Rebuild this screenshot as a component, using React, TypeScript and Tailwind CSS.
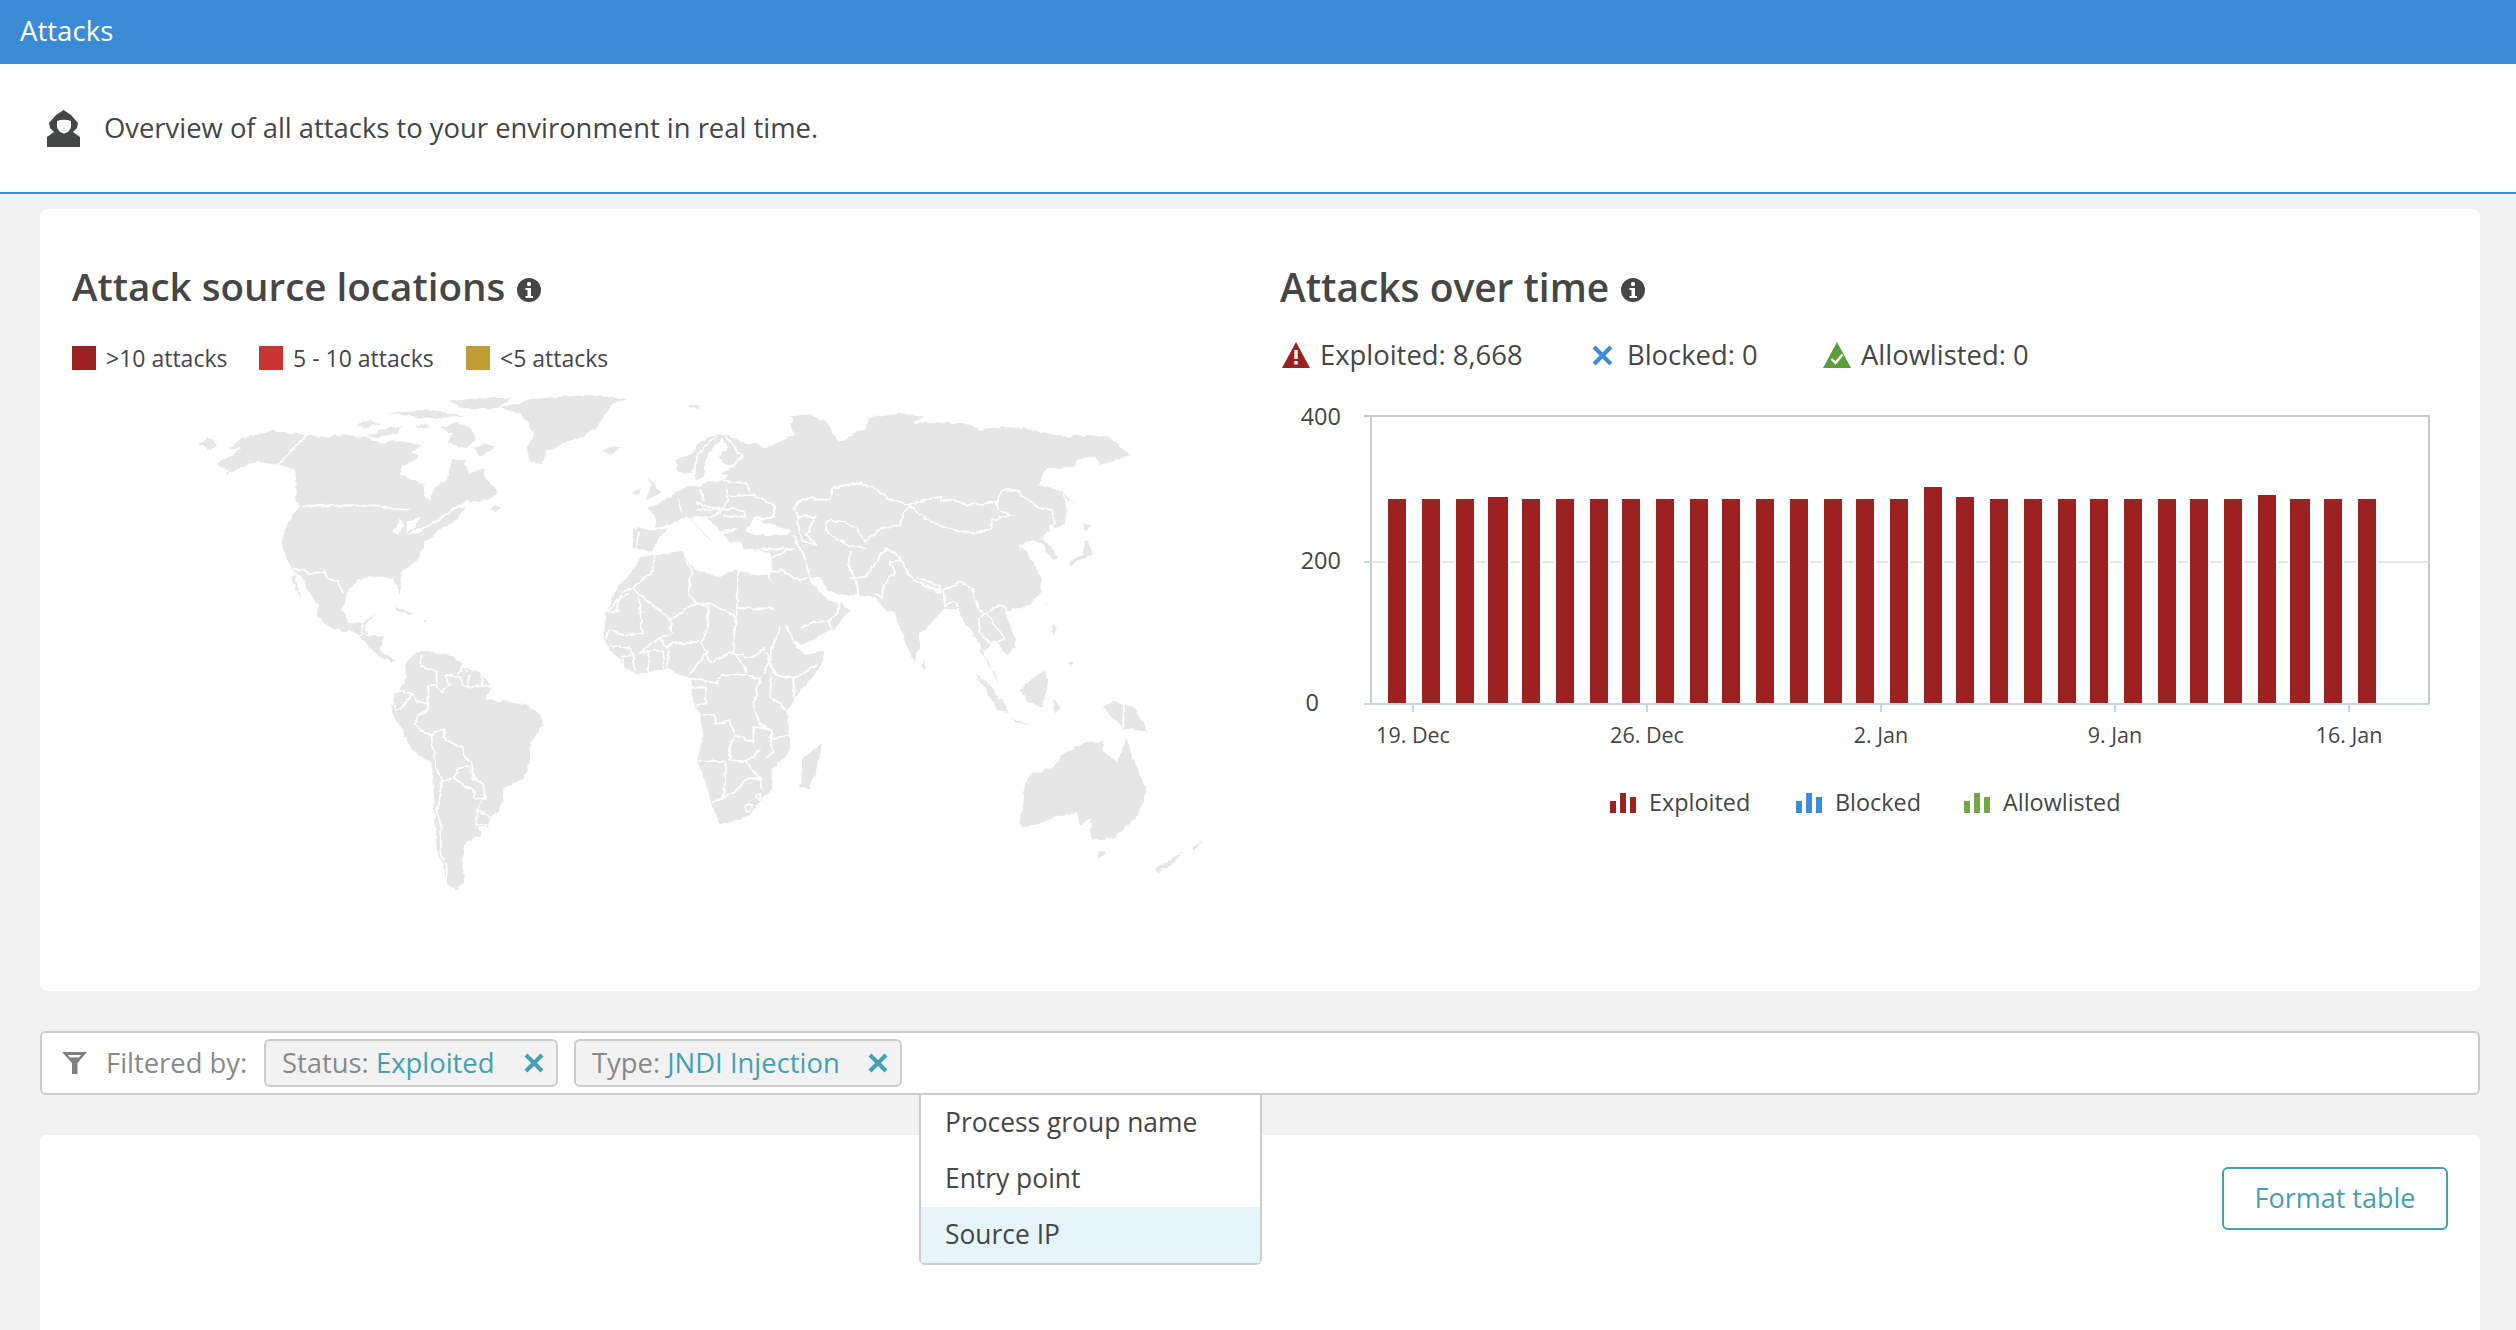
import React from "react";

const P = ({ d }: { d: string }) => <polygon points={d} />;
const L = ({ d }: { d: string }) => <polyline points={d} />;

const west = [
  "58,178 80,158 115,180 85,195",
  "110,232 150,215 185,190 145,190 190,158 280,137 380,150 420,158 490,148 560,160 610,178 640,165 700,175 725,185 690,200 720,215 665,245 660,268 690,282 730,298 735,335 750,345 768,305 800,285 805,262 818,222 850,225 868,265 912,250 918,285 955,318 925,345 860,350 820,372 860,370 830,405 790,425 760,450 735,470 720,520 665,560 660,630 650,605 640,578 580,575 530,583 500,625 487,670 505,715 545,715 590,682 555,725 565,745 610,755 600,795 650,830 672,830 640,830 590,810 550,765 510,735 490,742 440,720 415,695 415,660 385,620 370,580 345,560 335,545 315,515 305,470 320,420 345,380 360,370 345,340 350,290 340,250 290,240 240,230 210,235 170,255 135,272 150,255 110,240",
  "340,555 350,600 367,640 348,615 338,580",
  "925,375 945,360 965,368 945,378",
  "530,125 560,105 600,115 550,130",
  "560,155 620,130 665,122 650,145 600,155",
  "705,125 740,115 750,130 715,130",
  "780,130 830,110 870,130 890,160 860,190 800,170 820,145",
  "880,190 910,175 950,185 900,215",
  "805,50 880,40 1000,38 950,70 850,70",
  "620,85 760,75 850,95 760,100",
  "960,70 1050,42 1220,30 1340,42 1300,55 1270,95 1250,130 1190,160 1140,178 1100,200 1085,240 1050,230 1040,190 1060,150 1040,110 1020,85",
  "1265,192 1325,185 1290,205",
  "650,662 700,688 690,692 645,668",
  "730,705 760,710 735,712",
  "672,840 700,810 720,798 760,800 820,815 860,850 900,865 935,905 915,945 990,950 1050,965 1085,990 1088,1020 1050,1075 1050,1130 1030,1180 970,1215 968,1250 935,1300 925,1325 890,1325 905,1350 860,1370 850,1390 845,1440 855,1470 835,1515 800,1500 790,1440 770,1395 765,1300 760,1180 750,1130 695,1095 660,1020 635,985 640,940 680,880",
];
const westLines = [
  "380,150 295,240",
  "365,362 605,362 640,372 690,375",
  "340,550 365,555 390,568 430,560 445,585 470,585 490,625",
  "725,810 720,845 770,860 770,900 745,905 745,975",
  "770,900 785,920 810,900 795,870 840,875 850,905 880,905 910,900 935,905",
  "835,870 850,835 860,860",
  "865,870 865,905",
  "905,865 905,900",
  "655,915 690,925 715,950 745,955",
  "690,930 680,955 650,980 640,950",
  "745,975 715,990 705,1015 725,1040 755,1050 790,1035 795,1065 845,1085 850,1110 875,1130 880,1180 910,1195 915,1240 880,1240",
  "755,1050 760,1120 785,1190",
  "785,1190 820,1180 835,1150 865,1145 880,1180",
  "820,1180 850,1200 885,1220 880,1240",
  "920,1235 890,1275 940,1300",
  "890,1275 888,1320 925,1320",
  "785,1190 775,1250 770,1280 785,1320 780,1400 800,1440 800,1500",
  "545,720 550,745 530,760",
  "555,750 610,750",
  "860,350 820,372 790,395 740,425 700,440",
];
const westLakes = [
  "640,445 660,400 672,420 655,448",
  "680,410 722,395 705,430 680,445",
  "680,450 740,425 712,445",
];

const old = [
  "130,430 195,432 195,390 170,372 225,345 262,320 290,305 330,305 345,290 405,285 415,270 395,262 440,245 400,235 385,215 415,185 395,160 375,180 345,225 345,275 320,285 305,265 265,262 255,225 300,210 330,170 370,150 420,150 455,170 510,180 530,190 560,175 615,150 600,118 660,88 715,115 745,175 785,150 830,130 838,100 930,85 1000,92 970,115 1030,112 1130,115 1170,135 1230,125 1310,130 1420,155 1490,150 1560,155 1620,213 1530,240 1515,215 1460,225 1455,245 1370,250 1342,300 1380,310 1420,320 1430,375 1425,415 1400,430 1380,420 1375,440 1350,460 1375,475 1405,520 1385,520 1360,480 1330,465 1285,480 1305,495 1320,520 1355,580 1355,620 1330,650 1300,670 1270,670 1245,680 1275,760 1275,790 1250,810 1220,770 1200,775 1180,810 1195,830 1232,905 1215,880 1175,800 1165,770 1145,740 1125,720 1105,670 1060,670 1030,710 990,745 990,790 970,828 945,770 920,700 915,680 890,680 860,640 800,630 745,630 720,620 690,580 660,575 660,590 715,650 745,650 780,675 740,725 635,780 615,770 580,700 565,640 540,595 545,560 545,520 540,500 460,495 455,470 415,470 395,445 350,400 320,395 300,400 350,450 365,470 340,445 290,390 270,405 240,420 205,465 185,500 145,490 125,490",
  "155,515 195,510 280,500 285,520 315,555 390,575 440,555 500,570 535,570 575,660 590,735 620,790 650,810 705,795 690,850 610,945 590,985 600,1050 600,1100 545,1150 545,1210 510,1250 480,1290 390,1322 365,1260 350,1200 322,1125 340,1050 330,990 305,940 305,880 270,870 240,850 135,868 100,840 60,790 40,760 50,680 80,610 120,570",
  "695,1075 690,1120 660,1210 630,1205 640,1120",
  "170,270 215,325 170,345 185,300",
  "125,325 150,310 145,330",
  "40,195 95,185 60,205",
  "290,60 330,60 322,75",
  "600,95 660,85 625,130",
  "998,820 1010,850 1000,855",
  "1420,320 1455,360 1430,340",
  "1478,415 1505,425 1490,438",
  "1490,465 1508,510 1470,525 1440,545 1440,530 1475,510",
  "1370,650 1375,665 1368,662",
  "1385,720 1400,730 1390,755",
  "1435,835 1450,830 1445,850",
  "1152,865 1190,890 1250,965 1250,985 1220,970 1190,920",
  "1255,998 1330,1020 1280,1012",
  "1290,915 1330,880 1365,855 1375,905 1355,965 1310,950",
  "1390,940 1415,970 1395,985",
  "1515,935 1540,965 1570,950 1600,960 1630,965 1675,1040 1600,1030 1570,1000",
  "1305,1195 1320,1170 1390,1145 1410,1115 1455,1090 1490,1070 1540,1070 1535,1095 1580,1130 1610,1060 1625,1110 1670,1220 1645,1290 1570,1360 1505,1365 1500,1300 1470,1320 1460,1285 1400,1295 1350,1315 1295,1325 1288,1315 1300,1250",
  "1525,1400 1550,1400 1525,1422",
  "1805,1385 1840,1365 1815,1395 1805,1395",
  "1692,1455 1780,1400 1740,1445 1705,1458",
];
const oldSeas = [
  "465,440 495,395 525,400 555,380 555,395 510,410 600,435 590,450 500,450",
];
const oldLines = [
  "625,350 615,365 640,340 720,345 725,310 790,295 850,305 890,340 960,360 1000,345 1055,335 1050,345 1090,345 1130,360 1190,355 1220,350 1235,315 1275,315 1305,340 1350,370 1390,375 1395,415 1380,425",
  "960,365 1015,405 1070,430 1155,445 1205,430 1205,405 1265,390 1225,375 1220,350",
  "625,400 610,365",
  "710,405 760,410 800,430 825,470 870,430 930,420 940,385 960,360",
  "710,405 705,435 740,460 780,480 830,490",
  "625,395 675,395 650,450 680,480 640,470 625,440 625,395",
  "610,450 640,510 660,575",
  "780,500 775,540 800,590 805,630",
  "780,580 830,575 870,510 890,490 930,520",
  "855,630 880,640 880,600 915,560 900,530 935,525 960,570",
  "930,515 950,560 970,585 1010,600 1050,620 1080,605 1115,590 1150,620 1160,660 1180,690 1230,660 1250,675",
  "970,585 1045,620 1050,605 980,575",
  "1180,690 1165,700 1170,740 1195,770 1225,770 1245,760 1215,720 1195,690",
  "1060,620 1065,665 1090,650 1105,665",
  "460,495 610,490 545,520",
  "545,560 575,555 630,590 660,575",
  "630,730 680,710 715,710 745,680 745,650",
  "715,710 725,730",
  "330,310 340,350",
  "262,340 275,380",
  "410,310 415,345 400,370",
  "385,285 470,295 480,320",
  "415,335 490,330 555,360 555,385",
  "320,345 340,365 400,370",
  "320,375 395,375 370,395 320,395",
  "400,370 460,375 470,395 400,395",
  "350,400 390,440 440,430 390,450",
  "195,430 240,425",
  "148,440 135,490",
  "310,270 320,210 385,150",
  "405,150 435,190 460,215 420,250",
  "195,510 190,555 125,610",
  "125,610 100,620 65,665 50,680 80,680 85,640 120,625",
  "125,610 240,700 245,745 210,760 150,800",
  "148,640 155,745 90,750 60,735 45,760",
  "240,705 320,655 355,665",
  "285,520 305,560 295,625 320,655 360,655 440,695 445,555",
  "445,670 555,670",
  "440,695 430,770 430,800 470,860",
  "355,665 355,720 335,770",
  "330,770 350,800 300,870",
  "210,760 230,790 250,770 280,775 330,770",
  "220,790 220,850",
  "235,795 235,850",
  "175,800 175,860",
  "125,800 135,860",
  "150,800 215,795",
  "60,780 120,790 130,810 95,815 100,840",
  "350,810 360,835 420,805 450,810 490,820 520,790 530,805 540,830 520,870",
  "570,725 545,790 540,830 555,870 610,880 680,840",
  "610,880 612,940",
  "300,880 380,895 395,870 450,865 510,880 490,960 510,1020 545,1035 490,1025",
  "305,905 345,905 350,955 320,960",
  "335,990 370,990 380,1015 420,1005 435,1050 490,1070 490,1025",
  "545,875 540,935 590,975",
  "545,1035 545,1060 600,1050",
  "430,1060 420,1075 420,1125 470,1130 510,1095",
  "325,1125 410,1130",
  "410,1130 400,1240 365,1250",
  "400,1240 440,1215 470,1180 510,1180 465,1130",
  "510,1180 515,1215",
  "530,1120 550,1100 540,1050",
  "462,1270 475,1255 488,1262 475,1280 462,1270",
  "500,1232 510,1225 515,1240 505,1245 500,1232",
  "1602,960 1600,1030",
];

function WorldMap() {
  return (
    <svg width="1040" height="520" viewBox="0 0 1040 520" className="block">
      <defs>
        <filter id="rough" x="0" y="0" width="100%" height="100%">
          <feTurbulence type="fractalNoise" baseFrequency="0.14" numOctaves="2" seed="4" />
          <feDisplacementMap in="SourceGraphic" scale="5" xChannelSelector="R" yChannelSelector="G" />
        </filter>
      </defs>
      <g filter="url(#rough)">
        <g transform="scale(0.33333)" fill="#e6e6e6" strokeLinejoin="round">
          {west.map((d, i) => (
            <P key={i} d={d} />
          ))}
          <g fill="#ffffff">
            {westLakes.map((d, i) => (
              <P key={i} d={d} />
            ))}
          </g>
          <g fill="none" stroke="#ffffff" strokeWidth="5">
            {westLines.map((d, i) => (
              <L key={i} d={d} />
            ))}
          </g>
          <g transform="translate(1230 0)">
            {old.map((d, i) => (
              <P key={i} d={d} />
            ))}
            <g fill="#ffffff">
              {oldSeas.map((d, i) => (
                <P key={i} d={d} />
              ))}
            </g>
            <g fill="none" stroke="#ffffff" strokeWidth="5">
              {oldLines.map((d, i) => (
                <L key={i} d={d} />
              ))}
            </g>
          </g>
        </g>
      </g>
    </svg>
  );
}

const bars: [number, number, number][] = [
  [1388, 18, 499], [1422, 18, 499], [1456, 18, 499], [1488, 20, 497], [1522, 18, 499], [1556, 18, 499],
  [1590, 18, 499], [1622, 18, 499], [1656, 18, 499], [1690, 18, 499], [1722, 18, 499], [1756, 18, 499],
  [1790, 18, 499], [1824, 18, 499], [1856, 18, 499], [1890, 18, 499], [1924, 18, 487], [1956, 18, 497],
  [1990, 18, 499], [2024, 18, 499], [2058, 18, 499], [2090, 18, 499], [2124, 18, 499], [2158, 18, 499],
  [2190, 18, 499], [2224, 18, 499], [2258, 18, 495], [2290, 20, 499], [2324, 18, 499], [2358, 18, 499],
];

function Chart() {
  const ticks: [number, string][] = [
    [1413, "19. Dec"],
    [1647, "26. Dec"],
    [1881, "2. Jan"],
    [2115, "9. Jan"],
    [2349, "16. Jan"],
  ];
  const xf = { fontFamily: "'Open Sans', sans-serif", fontSize: 21.5, fill: "#454646" };
  const yf = { fontFamily: "'Open Sans', sans-serif", fontSize: 23.5, fill: "#454646" };
  return (
    <svg width="1160" height="350" viewBox="1280 400 1160 350" className="block">
      <path d="M1364 416H2429V704" fill="none" stroke="#c9c9c9" strokeWidth="2" />
      <path d="M1371 416V704" fill="none" stroke="#c8cfdc" strokeWidth="2" />
      <path d="M1364 562H2429" stroke="#e6e6e6" strokeWidth="2" />
      <path d="M1364 562H1371" stroke="#c8d3e8" strokeWidth="2" />
      {bars.map(([x, w, t]) => (
        <g key={x}>
          <rect x={x - 2} y={t} width={w + 4} height={704 - t} fill="#ffffff" />
          <rect x={x} y={t} width={w} height={704 - t} fill="#9c2121" />
        </g>
      ))}
      <path d="M1364 704H2429" stroke="#c8d3e8" strokeWidth="2" />
      {ticks.map(([x, s]) => (
        <g key={s}>
          <path d={`M${x} 704V712`} stroke="#c8d3e8" strokeWidth="2" />
          <text x={x} y={743} textAnchor="middle" style={xf}>
            {s}
          </text>
        </g>
      ))}
      <text x={1341} y={425} textAnchor="end" style={yf}>400</text>
      <text x={1341} y={569} textAnchor="end" style={yf}>200</text>
      <text x={1319} y={711} textAnchor="end" style={yf}>0</text>
    </svg>
  );
}

const Info = () => (
  <svg width="24" height="24" viewBox="0 0 24 24" className="mt-1.5 block">
    <circle cx="12" cy="12" r="12" fill="#454646" />
    <rect x="10" y="4" width="4" height="4" rx="1.5" fill="#fff" />
    <path d="M8.5 10H14V18H16V20H8.5V18H10.5V12H8.5Z" fill="#fff" />
  </svg>
);

const BarsIcon = ({ c }: { c: string }) => (
  <svg width="26" height="20" viewBox="0 0 26 20" className="block">
    <rect x="0" y="8" width="6" height="12" fill={c} />
    <rect x="10" y="0" width="6" height="20" fill={c} />
    <rect x="20" y="4" width="6" height="16" fill={c} />
  </svg>
);

const Cross = ({ c, s }: { c: string; s: number }) => (
  <svg width={s} height={s} viewBox="0 0 20 20" className="block">
    <path d="M2 2L18 18M18 2L2 18" stroke={c} strokeWidth="4" fill="none" />
  </svg>
);

export default function App() {
  return (
    <div className="flex h-[1330px] w-[2516px] flex-col overflow-hidden bg-[#f2f2f2] font-['Open_Sans',sans-serif] text-[#454646]">
      <header className="flex h-16 shrink-0 items-center bg-[#3a8ad6] pb-0.5 pl-5 text-[27.6px] text-white">Attacks</header>

      <div className="flex h-[130px] shrink-0 items-center border-b-2 border-[#3a8ad6] bg-white pl-[47px] text-[27.4px]">
        <svg width="33" height="37" viewBox="0 0 33 37" className="mr-6 block">
          <path d="M16.5 0L24 5L31 13L30 18L26 22L33 27V37H0V27L7 22L3 18L2 13L9 5Z" fill="#454646" />
          <path d="M10 11Q17 8.5 24 11V17Q22.5 22.5 17 23.5Q11.5 22.5 10 17Z" fill="#fff" />
        </svg>
        <span>Overview of all attacks to your environment in real time.</span>
      </div>

      <section className="ml-10 mr-9 mt-[15px] flex h-[782px] shrink-0 rounded-md bg-white">
        <div className="w-[1240px] shrink-0 pl-8 pt-[52px]">
          <div className="flex h-[52px] items-center gap-3">
            <h2 className="text-[38.6px] font-semibold">Attack source locations</h2>
            <Info />
          </div>
          <div className="mt-[33px] flex h-6 items-center text-[23px]">
            <span className="h-6 w-6 bg-[#9c2121]" />
            <span className="ml-2.5 w-[153px]">&gt;10 attacks</span>
            <span className="h-6 w-6 bg-[#cc3333]" />
            <span className="ml-2.5 w-[173px]">5 - 10 attacks</span>
            <span className="h-6 w-6 bg-[#c29d34]" />
            <span className="ml-2.5">&lt;5 attacks</span>
          </div>
          <div className="ml-[108px] mt-[15px] w-[1040px]">
            <WorldMap />
          </div>
        </div>

        <div className="w-[1160px] shrink-0 pt-[52px]">
          <div className="flex h-[52px] items-center gap-3">
            <h2 className="text-[38.9px] font-semibold">Attacks over time</h2>
            <Info />
          </div>
          <div className="mt-[26px] flex h-8 items-center text-[27.4px]">
            <svg width="28" height="26" viewBox="0 0 28 26" className="ml-0.5 block">
              <path d="M14 0L28 26H0Z" fill="#9c2121" />
              <rect x="12.3" y="8" width="3.4" height="9" fill="#fff" />
              <rect x="12.3" y="19" width="3.4" height="3.4" fill="#fff" />
            </svg>
            <span className="ml-2.5 w-[272px]">Exploited: 8,668</span>
            <Cross c="#3d8bdb" s={21} />
            <span className="ml-3.5 w-[196px]">Blocked: 0</span>
            <svg width="28" height="26" viewBox="0 0 28 26" className="block">
              <path d="M14 0L28 26H0Z" fill="#5a9e3c" />
              <path d="M8.5 17L12.5 21L19.5 12.5" stroke="#fff" strokeWidth="2.4" fill="none" />
            </svg>
            <span className="ml-2.5">Allowlisted: 0</span>
          </div>
          <div className="mt-[29px]">
            <Chart />
          </div>
          <div className="mt-[39px] flex h-7 items-center text-[23.4px]">
            <span className="ml-[330px]"><BarsIcon c="#9c2121" /></span>
            <span className="ml-[13px] w-[147px]">Exploited</span>
            <BarsIcon c="#3d8bdb" />
            <span className="ml-[13px] w-[129px]">Blocked</span>
            <BarsIcon c="#6fa845" />
            <span className="ml-[13px]">Allowlisted</span>
          </div>
        </div>
      </section>

      <div className="relative ml-10 mr-9 mt-10 flex h-[64px] shrink-0 items-center rounded-md border-2 border-[#cccccc] bg-white pl-5 text-[27.4px] text-[#898989]">
        <svg width="25" height="22" viewBox="0 0 25 22" className="block">
          <path d="M0 0H25L15.5 11V22H10V11Z" fill="#808080" />
          <path d="M6 3H19L17 5.5H8Z" fill="#fff" />
        </svg>
        <span className="ml-[19px] w-[158px]">Filtered by:</span>
        <div className="flex h-12 w-[294px] items-center rounded-md border-2 border-[#cccccc] bg-[#f2f2f2] pl-4">
          <span>Status:&nbsp;</span>
          <span className="text-[#45a0b2]">Exploited</span>
          <span className="ml-auto mr-3"><Cross c="#45a0b2" s={20} /></span>
        </div>
        <div className="ml-4 flex h-12 w-[328px] items-center rounded-md border-2 border-[#cccccc] bg-[#f2f2f2] pl-4">
          <span>Type:&nbsp;</span>
          <span className="text-[#45a0b2]">JNDI Injection</span>
          <span className="ml-auto mr-3"><Cross c="#45a0b2" s={20} /></span>
        </div>
        <div className="absolute left-[877px] top-[62px] z-10 w-[343px] rounded-b-md border-x-2 border-b-2 border-[#cccccc] bg-white text-[26.4px] text-[#454646]">
          <div className="flex h-14 items-center pb-px pl-6">Process group name</div>
          <div className="flex h-14 items-center pb-px pl-6">Entry point</div>
          <div className="flex h-14 items-center bg-[#e4f4f8] pb-px pl-6">Source IP</div>
        </div>
      </div>

      <section className="ml-10 mr-9 mt-10 flex flex-1 justify-end rounded-t-md bg-white pr-8 pt-8">
        <button className="h-[63px] w-[226px] rounded-md border-2 border-[#45a0b2] bg-white text-[27px] text-[#45a0b2]">Format table</button>
      </section>
    </div>
  );
}
